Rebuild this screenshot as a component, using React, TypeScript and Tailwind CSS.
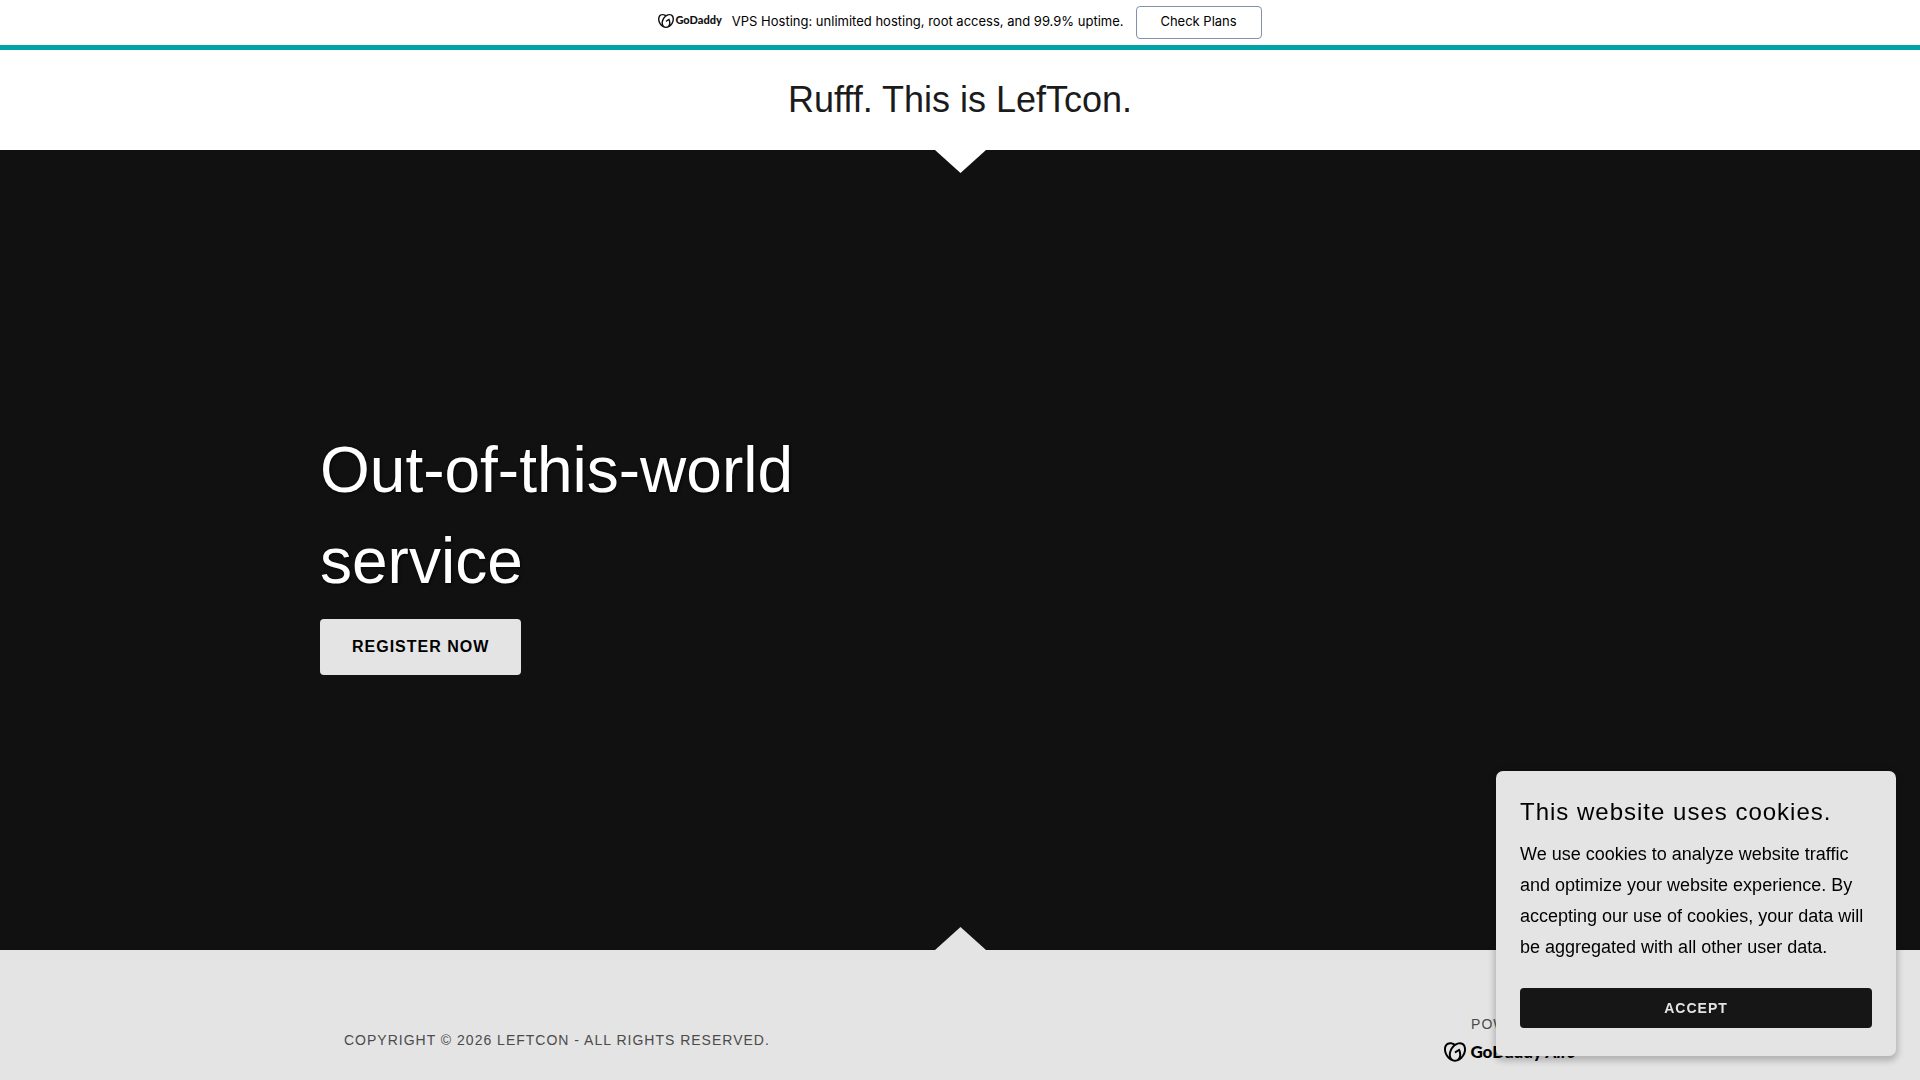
import type { ReactNode } from 'react';
import { SiGodaddy } from 'react-icons/si';

const Panel = ({ children }: { children: ReactNode }) => (
    <div className="mx-auto flex w-2/3 flex-col">{children}</div>
);

const TopBanner = () => (
    <div className="flex h-[50px] items-center justify-center border-b-[5px] border-[#00a4a6] bg-white font-[Inter,sans-serif] text-[13px] text-[#111111]">
        <a href="#godaddy" className="flex items-center gap-px pb-1 font-[Lato,sans-serif] text-[11px] font-black">
            <SiGodaddy className="size-4" aria-hidden="true" />
            <span>GoDaddy</span>
        </a>
        <span className="ml-2.5 pb-px text-black">
            VPS Hosting: unlimited hosting, root access, and 99.9% uptime.
        </span>
        <button type="button" className="ml-3 h-[33px] w-[126px] rounded-[4px] border border-[#8090ad] pb-px text-black">
            Check Plans
        </button>
    </div>
);

const CookieBanner = () => (
    <section
        aria-label="Cookies"
        className="fixed right-6 bottom-6 w-[400px] rounded-[7px] bg-[#e4e4e4] p-6 pb-7 text-black shadow-[0_3px_6px_2px_rgba(0,0,0,0.22)]"
    >
        <h2 className="text-[24px] leading-[34px] tracking-[1px]">This website uses cookies.</h2>
        <p className="mt-2.5 text-[18px] leading-[31px]">
            We use cookies to analyze website traffic and optimize your website experience. By accepting our use of
            cookies, your data will be aggregated with all other user data.
        </p>
        <button
            type="button"
            className="mt-[25px] h-10 w-full rounded-[4px] bg-[#161616] text-[14px] font-bold tracking-[1px] text-[#e4e4e4]"
        >
            ACCEPT
        </button>
    </section>
);

export default function App() {
    return (
        <div className="flex min-h-screen flex-col bg-[#e4e4e4] font-['Liberation_Sans',Arial,sans-serif]">
            <TopBanner />

            <header className="flex h-[100px] items-center justify-center bg-white">
                <h1 className="text-[36px] leading-[50px] text-[#1b1b1b]">Rufff. This is LefTcon.</h1>
            </header>

            <main className="relative flex h-[800px] flex-col justify-center bg-[#111111]">
                {/* Notches that tie the hero to the header and the footer */}
                <svg viewBox="0 0 52 23" className="absolute top-0 left-1/2 h-[23px] w-[52px] -translate-x-1/2" aria-hidden="true">
                    <path d="M1 0H52L26.5 23Z" fill="#ffffff" />
                </svg>
                <svg viewBox="0 0 52 23" className="absolute bottom-0 left-1/2 h-[23px] w-[52px] -translate-x-1/2" aria-hidden="true">
                    <path d="M1 23H52L26.5 0Z" fill="#e4e4e4" />
                </svg>

                <Panel>
                    <h2 className="w-1/2 text-[64px] leading-[91px] text-white [text-shadow:1px_1px_3px_rgba(0,0,0,0.8)]">
                        Out-of-this-world service
                    </h2>
                    <a
                        href="#register"
                        className="mt-3 flex h-14 items-center self-start rounded-[4px] bg-[#e4e4e4] px-8 text-[16px] font-bold tracking-[1px] text-black"
                    >
                        REGISTER NOW
                    </a>
                </Panel>
            </main>

            <footer className="h-[130px] pt-[62px] text-[14px] text-[#4b4b4b]">
                <Panel>
                    <div className="flex items-center justify-between px-6">
                        <p className="tracking-[1px]">COPYRIGHT © 2026 LEFTCON - ALL RIGHTS RESERVED.</p>
                        <div className="flex flex-col items-end">
                            <p className="leading-6 tracking-[1px]">POWERED BY</p>
                            <a href="#airo" className="flex h-8 items-center gap-1 font-[Lato,sans-serif] text-[17px] font-black text-black">
                                <SiGodaddy className="size-[22px]" aria-hidden="true" />
                                <span>
                                    GoDaddy <i>Airo</i>
                                </span>
                            </a>
                        </div>
                    </div>
                </Panel>
            </footer>

            <CookieBanner />
        </div>
    );
}
